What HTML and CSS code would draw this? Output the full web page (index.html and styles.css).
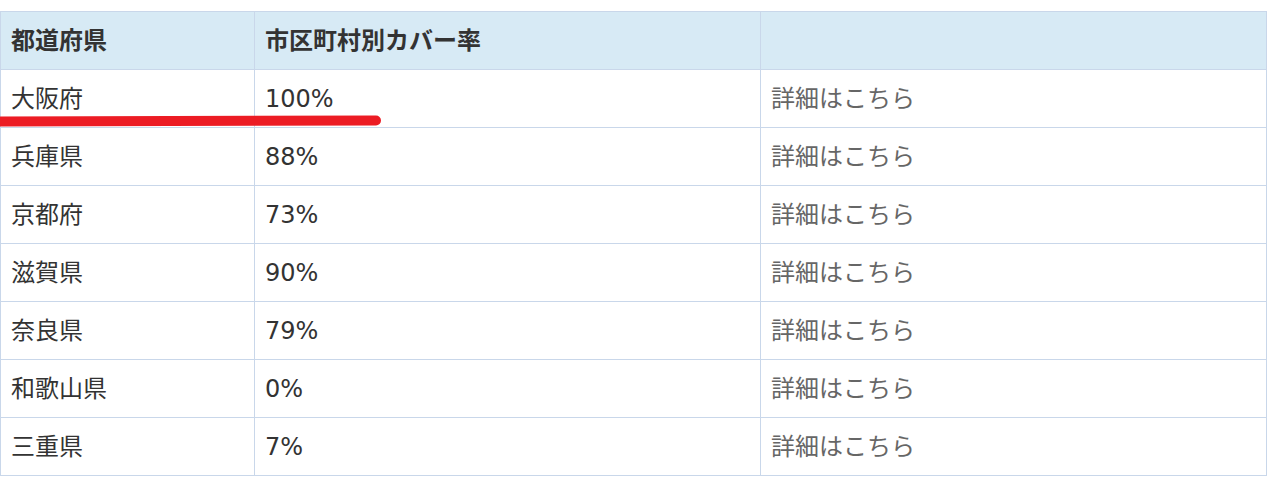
FILE: index.html
```html
<!DOCTYPE html>
<html lang="ja">
  <head>
    <meta charset="UTF-8" />
    <meta name="viewport" content="width=device-width, initial-scale=1.0" />
    <title>市区町村別カバー率</title>
    <link rel="stylesheet" href="styles.css">
  </head>
  <body>
    <div class="wrap">
      <table class="cover-table">
        <colgroup>
          <col class="col-pref">
          <col class="col-rate">
          <col class="col-link">
        </colgroup>
        <thead>
          <tr>
            <th>都道府県</th>
            <th>市区町村別カバー率</th>
            <th></th>
          </tr>
        </thead>
        <tbody>
          <tr><td>大阪府</td><td>100%</td><td><a href="#">詳細はこちら</a></td></tr>
          <tr><td>兵庫県</td><td>88%</td><td><a href="#">詳細はこちら</a></td></tr>
          <tr><td>京都府</td><td>73%</td><td><a href="#">詳細はこちら</a></td></tr>
          <tr><td>滋賀県</td><td>90%</td><td><a href="#">詳細はこちら</a></td></tr>
          <tr><td>奈良県</td><td>79%</td><td><a href="#">詳細はこちら</a></td></tr>
          <tr><td>和歌山県</td><td>0%</td><td><a href="#">詳細はこちら</a></td></tr>
          <tr><td>三重県</td><td>7%</td><td><a href="#">詳細はこちら</a></td></tr>
        </tbody>
      </table>
      <!-- 手書きの赤線 -->
      <svg class="marker" width="390" height="20" viewBox="0 0 390 20">
        <path d="M-6 10.5 C 80 10, 200 9.5, 376 9.5" fill="none" stroke="#ec1c24" stroke-width="10" stroke-linecap="round" />
      </svg>
    </div>
  </body>
</html>
```

FILE: styles.css
```css
body {
  margin: 0;
  padding: 11px 0 0 0;
  background-color: #ffffff;
  font-family: "DejaVu Sans", "Noto Sans CJK JP", sans-serif;
}

.wrap {
  position: relative;
  width: 1267px;
}

.cover-table {
  width: 1267px;
  border-collapse: collapse;
  table-layout: fixed;
}

.col-pref {
  width: 254px;
}

.col-rate {
  width: 506px;
}

.cover-table th,
.cover-table td {
  border: 1px solid #c9d7ea;
  height: 57px;
  padding: 0 0 0 10px;
  text-align: left;
  font-size: 24px;
  line-height: 30px;
  color: #333333;
}

.cover-table th {
  background-color: #d7eaf5;
  font-weight: bold;
}

.cover-table a {
  color: #666666;
  text-decoration: none;
}

.marker {
  position: absolute;
  left: 0;
  top: 100px;
}
```
